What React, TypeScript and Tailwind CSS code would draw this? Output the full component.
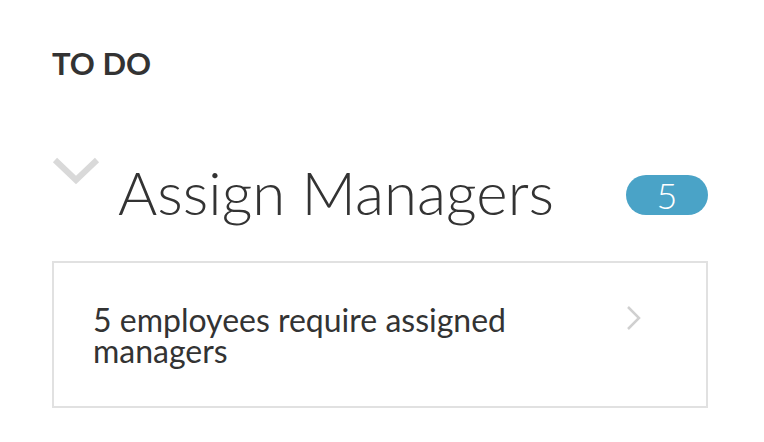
import React from "react";

export default function App() {
  return (
    <div className="w-[764px] h-[442px] bg-white overflow-hidden pl-[52px] pr-[56px] pt-[45px] text-[#333333]" style={{ fontFamily: "Lato, 'Noto Sans', sans-serif" }}>
      <div className="text-[31px] font-bold leading-[36px]">TO DO</div>
      <div className="mt-[76px] flex items-center h-[70px]">
        <svg width="48" height="28" viewBox="0 0 48 28" className="self-start mt-[0px] shrink-0">
          <path d="M3 3 L24 23 L45 3" fill="none" stroke="#d9d9d9" strokeWidth="6" strokeLinecap="butt" strokeLinejoin="miter" />
        </svg>
        <div className="ml-[18px] text-[60px] font-light leading-[70px] whitespace-nowrap">Assign Managers</div>
        <div className="ml-auto mt-[6px] w-[82px] h-[40px] rounded-full bg-[#4aa3c7] text-white flex items-center justify-center text-[36px] font-light leading-none">5</div>
      </div>
      <div className="mt-[34px] border-2 border-[#e1e1e1] h-[147px] flex items-center pl-[39px] pr-[64px]">
        <div className="text-[32px] leading-[31px] w-[470px]">5 employees require assigned managers</div>
        <svg width="16" height="26" viewBox="0 0 16 26" className="ml-auto mt-[-34px] shrink-0">
          <path d="M2 2 L13 13 L2 24" fill="none" stroke="#d0d0d0" strokeWidth="2.5" />
        </svg>
      </div>
    </div>
  );
}
